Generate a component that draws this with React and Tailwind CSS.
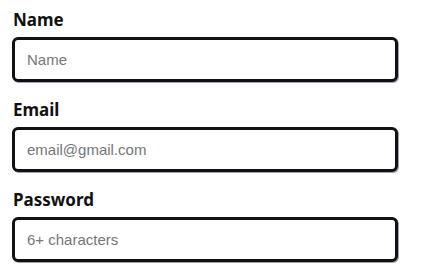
export default function App() {
  const fields = [
    { label: "Name", placeholder: "Name", type: "text" },
    { label: "Email", placeholder: "email@gmail.com", type: "email" },
    { label: "Password", placeholder: "6+ characters", type: "password" },
  ];

  return (
    <div className="min-h-[272px] w-[424px] bg-white px-3 pt-2">
      <form className="flex flex-col gap-4">
        {fields.map((f) => (
          <div key={f.label} className="flex flex-col gap-[5px]">
            <label className="pl-px text-[17px] font-bold leading-6 text-[#111]" style={{ fontFamily: "'Noto Sans', Lato, sans-serif" }}>
              {f.label}
            </label>
            <input
              type={f.type}
              placeholder={f.placeholder}
              className="h-[45px] w-[386px] rounded-md border-[3px] border-[#111] bg-white px-3 text-[15px] text-[#222] shadow-[1px_1px_0_#9ca3af] outline-none placeholder:text-[#767676]"
              style={{ fontFamily: "'Liberation Sans', Arial, sans-serif" }}
            />
          </div>
        ))}
      </form>
    </div>
  );
}
